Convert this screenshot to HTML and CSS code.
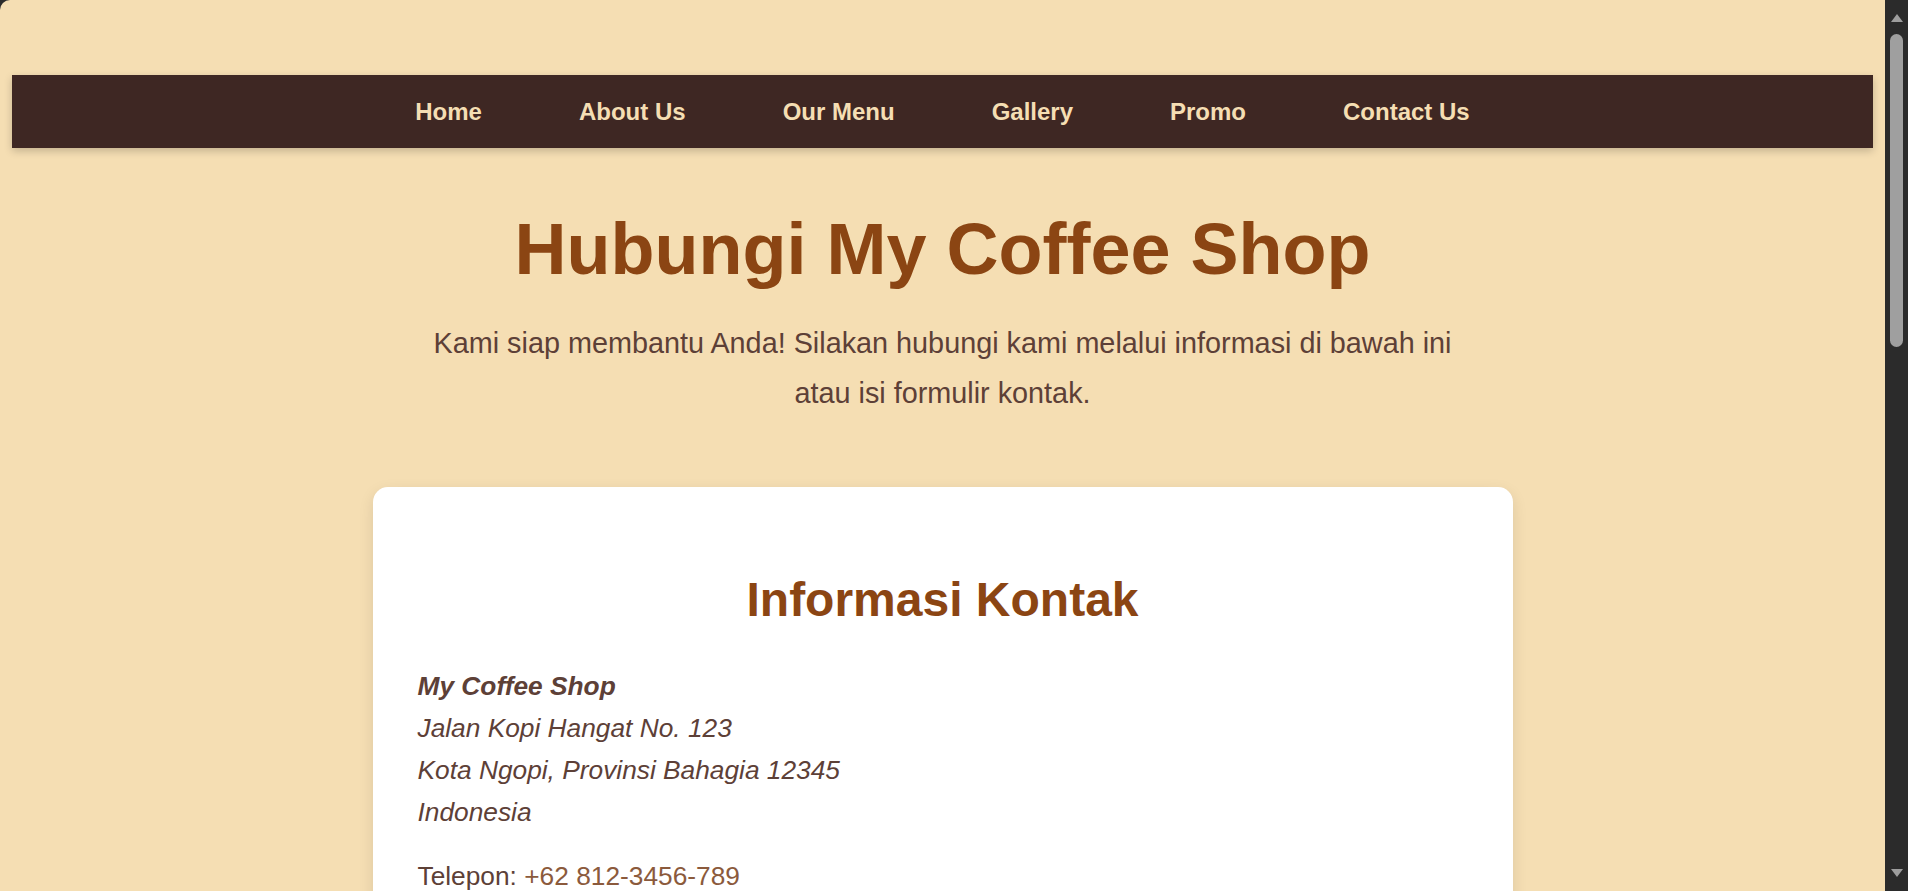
FILE: index.html
```html
<!DOCTYPE html>
<html lang="id">
<head>
<meta charset="utf-8">
<title>Hubungi My Coffee Shop</title>
<link rel="stylesheet" href="styles.css">
</head>
<body>
<div class="window">
  <div class="page">
    <header class="site-header">
      <nav class="main-nav">
        <a href="#" class="nav-link">Home</a>
        <a href="#" class="nav-link">About Us</a>
        <a href="#" class="nav-link">Our Menu</a>
        <a href="#" class="nav-link">Gallery</a>
        <a href="#" class="nav-link">Promo</a>
        <a href="#" class="nav-link">Contact Us</a>
      </nav>
    </header>
    <main class="content">
      <section class="hero">
        <h1 class="hero-title">Hubungi My Coffee Shop</h1>
        <p class="hero-text">Kami siap membantu Anda! Silakan hubungi kami melalui informasi di bawah ini atau isi formulir kontak.</p>
      </section>
      <section class="card">
        <h2 class="card-title">Informasi Kontak</h2>
        <address class="address">
          <strong>My Coffee Shop</strong><br>
          Jalan Kopi Hangat No. 123<br>
          Kota Ngopi, Provinsi Bahagia 12345<br>
          Indonesia
        </address>
        <p class="contact-line">Telepon: <a href="#" class="contact-link">+62 812-3456-789</a></p>
      </section>
    </main>
  </div>
  <div class="scrollbar">
    <span class="sb-arrow sb-up"></span>
    <span class="sb-track"><span class="sb-thumb"></span></span>
    <span class="sb-arrow sb-down"></span>
  </div>
</div>
</body>
</html>
```
FILE: styles.css
```css
html, body {
  margin: 0;
  padding: 0;
  height: 100%;
  overflow: hidden;
  background: #2b2b2b;
}

.window {
  display: flex;
  height: 100vh;
}

.page {
  flex: 1;
  min-width: 0;
  background: #f5deb3;
  border-top-left-radius: 10px;
  overflow: hidden;
  font-family: "Liberation Sans", Arial, sans-serif;
  color: #5d4037;
}

.site-header {
  padding: 75px 12px 0;
}

.main-nav {
  height: 73px;
  background: #3e2723;
  display: flex;
  justify-content: center;
  align-items: center;
  gap: 97px;
  box-shadow: 0 3px 8px rgba(0, 0, 0, 0.2);
}

.nav-link {
  color: #f5deb3;
  text-decoration: none;
  font-weight: bold;
  font-size: 24px;
  padding-top: 1px;
}

.content {
  display: flex;
  flex-direction: column;
  align-items: center;
}

.hero {
  text-align: center;
}

.hero-title {
  margin: 58px 0 0;
  font-size: 72px;
  line-height: 1.2;
  color: #8b4513;
  font-weight: bold;
}

.hero-text {
  margin: 26px auto 0;
  max-width: 1050px;
  font-size: 28.8px;
  line-height: 50px;
  color: #5d4037;
}

.card {
  box-sizing: border-box;
  width: 1140px;
  margin-top: 69px;
  padding: 45px 45px;
  background: #ffffff;
  border-radius: 15px;
  box-shadow: 0 5px 15px rgba(0, 0, 0, 0.1);
}

.card-title {
  margin: 39px 0 36px;
  text-align: center;
  font-size: 48px;
  line-height: 1.2;
  color: #8b4513;
}

.address {
  margin: 0 0 22px;
  font-size: 26.3px;
  line-height: 42px;
  color: #5d4037;
}

.contact-line {
  margin: 0 0 22px;
  font-size: 26.3px;
  line-height: 42px;
  color: #5d4037;
}

.contact-link {
  color: #8b5a3c;
  text-decoration: none;
}

.scrollbar {
  flex: none;
  width: 23px;
  display: flex;
  flex-direction: column;
  align-items: center;
  background: #2b2b2b;
}

.sb-arrow {
  width: 0;
  height: 0;
  border-left: 6px solid transparent;
  border-right: 6px solid transparent;
}

.sb-up {
  margin-top: 14px;
  border-bottom: 8px solid #9e9e9e;
}

.sb-down {
  margin-bottom: 14px;
  border-top: 8px solid #9e9e9e;
}

.sb-track {
  flex: 1;
  display: flex;
  justify-content: center;
  padding-top: 12px;
}

.sb-thumb {
  width: 13px;
  height: 313px;
  border-radius: 7px;
  background: #9f9f9f;
}
```
